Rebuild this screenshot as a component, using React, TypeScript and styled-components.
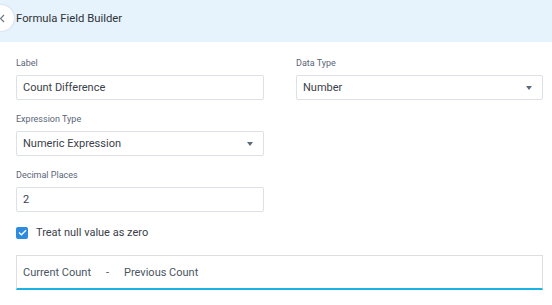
import React from "react";
import styled, { createGlobalStyle } from "styled-components";

const Global = createGlobalStyle`
  html, body { margin: 0; padding: 0; background: #fff; }
  body { font-family: Roboto, "Liberation Sans", Arial, sans-serif; overflow: hidden; }
  * { box-sizing: border-box; }
`;

const Page = styled.div`
  width: 552px;
  height: 305px;
  background: #fff;
  position: relative;
  overflow: hidden;
`;

const Header = styled.div`
  height: 42px;
  background: #e6f2fc;
  display: flex;
  align-items: flex-start;
  padding: 6px 16px 0 16px;
  position: relative;
`;

const HeaderRow = styled.div`
  height: 24px;
  display: flex;
  align-items: center;
`;

const BackButton = styled.div`
  position: absolute;
  left: -12px;
  top: 5px;
  width: 26px;
  height: 26px;
  border-radius: 50%;
  background: #fff;
  box-shadow: 0 0 2px rgba(0, 0, 0, 0.18);
  display: flex;
  align-items: center;
  justify-content: flex-end;
  padding-right: 9px;
`;

const Title = styled.span`
  font-size: 11.3px;
  color: #2f3438;
`;

const Form = styled.div`
  display: grid;
  grid-template-columns: 248px 247px;
  column-gap: 32px;
  row-gap: 13px;
  padding: 15px 9px 0 16px;
`;

const Field = styled.div`
  display: flex;
  flex-direction: column;
`;

const Label = styled.label`
  font-size: 9px;
  line-height: 12px;
  color: #5a6676;
  margin-bottom: 6px;
`;

const Box = styled.div`
  height: 25px;
  border: 1px solid #dde1e5;
  border-radius: 2px;
  display: flex;
  align-items: center;
  justify-content: space-between;
  padding: 0 10px 0 6px;
  font-size: 11px;
  color: #3a414a;
  background: #fff;
`;

const Caret = styled.span`
  width: 0;
  height: 0;
  border-left: 3.5px solid transparent;
  border-right: 3.5px solid transparent;
  border-top: 4px solid #5b6b7b;
`;

const CheckRow = styled.div`
  display: flex;
  align-items: center;
  gap: 8px;
  padding: 14px 16px 0 16px;
  font-size: 11px;
  color: #3a414a;
`;

const CheckBox = styled.span`
  width: 12px;
  height: 12px;
  border-radius: 2px;
  background: #2d8be0;
  display: flex;
  align-items: center;
  justify-content: center;
`;

const Expression = styled.div`
  margin: 16px 9px 0 16px;
  height: 35px;
  border: 1px solid #dedede;
  border-bottom: 2px solid #1cb2e3;
  display: flex;
  align-items: center;
  gap: 15px;
  padding: 1px 6px 0 6px;
  font-size: 11px;
  color: #4a5562;
`;

const Token = styled.span`
  white-space: nowrap;
`;

const Select = ({ value }: { value: string }) => (
  <Box>
    <span>{value}</span>
    <Caret />
  </Box>
);

export default function App() {
  return (
    <Page>
      <Global />
      <Header>
        <BackButton>
          <svg width="6" height="9" viewBox="0 0 6 9">
            <path d="M5 1 L1.5 4.5 L5 8" fill="none" stroke="#6b7480" strokeWidth="1.2" />
          </svg>
        </BackButton>
        <HeaderRow>
          <Title>Formula Field Builder</Title>
        </HeaderRow>
      </Header>
      <Form>
        <Field>
          <Label>Label</Label>
          <Box>Count Difference</Box>
        </Field>
        <Field>
          <Label>Data Type</Label>
          <Select value="Number" />
        </Field>
        <Field>
          <Label>Expression Type</Label>
          <Select value="Numeric Expression" />
        </Field>
        <div />
        <Field>
          <Label>Decimal Places</Label>
          <Box>2</Box>
        </Field>
      </Form>
      <CheckRow>
        <CheckBox>
          <svg width="9" height="7" viewBox="0 0 9 7">
            <path d="M1 3.6 L3.4 5.8 L8 1.2" fill="none" stroke="#fff" strokeWidth="1.3" />
          </svg>
        </CheckBox>
        <span>Treat null value as zero</span>
      </CheckRow>
      <Expression>
        <Token>Current Count</Token>
        <Token>-</Token>
        <Token>Previous Count</Token>
      </Expression>
    </Page>
  );
}
